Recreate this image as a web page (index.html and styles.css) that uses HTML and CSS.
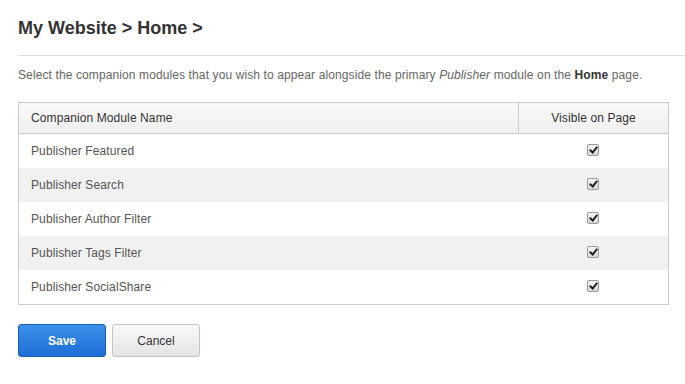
FILE: index.html
```html
<!DOCTYPE html>
<html lang="en">
<head>
  <meta charset="UTF-8" />
  <title>Companion Modules</title>
  <link rel="stylesheet" href="styles.css">
</head>
<body>
  <div class="page">
    <h1 class="crumbs">My Website &gt; Home &gt;</h1>
    <hr class="rule" />
    <p class="intro">Select the companion modules that you wish to appear alongside the primary <em>Publisher</em> module on the <strong>Home</strong> page.</p>
    <table class="modules">
      <thead>
        <tr><th>Companion Module Name</th><th class="vis">Visible on Page</th></tr>
      </thead>
      <tbody>
        <tr><td>Publisher Featured</td><td class="vis"><input type="checkbox" checked /></td></tr>
        <tr><td>Publisher Search</td><td class="vis"><input type="checkbox" checked /></td></tr>
        <tr><td>Publisher Author Filter</td><td class="vis"><input type="checkbox" checked /></td></tr>
        <tr><td>Publisher Tags Filter</td><td class="vis"><input type="checkbox" checked /></td></tr>
        <tr><td>Publisher SocialShare</td><td class="vis"><input type="checkbox" checked /></td></tr>
      </tbody>
    </table>
    <div class="actions">
      <button class="btn btn-primary">Save</button>
      <button class="btn">Cancel</button>
    </div>
  </div>
</body>
</html>
```
FILE: styles.css
```css
body {
  margin: 0;
  font-family: 'Liberation Sans', Arial, sans-serif;
  color: #555;
  background: #fff;
}
.page {
  padding: 17px 0 0 18px;
}
.crumbs {
  margin: 0;
  font-size: 18px;
  line-height: 22px;
  color: #333;
  font-weight: bold;
}
.rule {
  border: 0;
  border-top: 1px solid #ddd;
  margin: 16px 0 0 0;
}
.intro {
  margin: 11px 0 0 0;
  font-size: 12px;
  line-height: 16px;
  letter-spacing: 0.11px;
  color: #666;
}
.intro strong {
  color: #333;
}
.modules {
  margin-top: 19px;
  width: 651px;
  border-collapse: collapse;
  border: 1px solid #ccc;
  font-size: 12px;
  letter-spacing: 0.1px;
}
.modules th {
  text-align: left;
  font-weight: normal;
  color: #333;
  height: 30px;
  padding: 0 12px;
  background: linear-gradient(#fafafa, #efefef);
  border-bottom: 1px solid #ccc;
}
.modules th.vis {
  border-left: 1px solid #ccc;
  width: 125px;
  text-align: center;
}
.modules td {
  height: 34px;
  padding: 0 12px;
  color: #555;
}
.modules td.vis {
  text-align: center;
}
.modules tbody tr:nth-child(even) td {
  background: #f1f1f1;
}
.modules input {
  appearance: none;
  position: relative;
  top: -2px;
  margin: 0;
  width: 12px;
  height: 12px;
  vertical-align: middle;
  border: 1px solid #9a9a9a;
  border-radius: 2px;
  background: linear-gradient(#f6f6f6, #d8d8d8);
}
.modules input:checked::after {
  content: "";
  position: absolute;
  left: 3px;
  top: 0;
  width: 3px;
  height: 6px;
  border-right: 2px solid #222;
  border-bottom: 2px solid #222;
  transform: rotate(40deg);
}
.actions {
  margin-top: 19px;
  display: flex;
  gap: 6px;
}
.btn {
  width: 88px;
  height: 33px;
  font-family: 'Liberation Sans', Arial, sans-serif;
  font-size: 12px;
  color: #333;
  border: 1px solid #c4c4c4;
  border-radius: 3px;
  background: linear-gradient(#f9f9f9, #e4e4e4);
  box-shadow: 0 1px 1px rgba(0,0,0,0.1);
}
.btn-primary {
  color: #fff;
  font-weight: bold;
  border-color: #1c5fb0;
  background: linear-gradient(#3d91ea, #1c6ed6);
}
```
